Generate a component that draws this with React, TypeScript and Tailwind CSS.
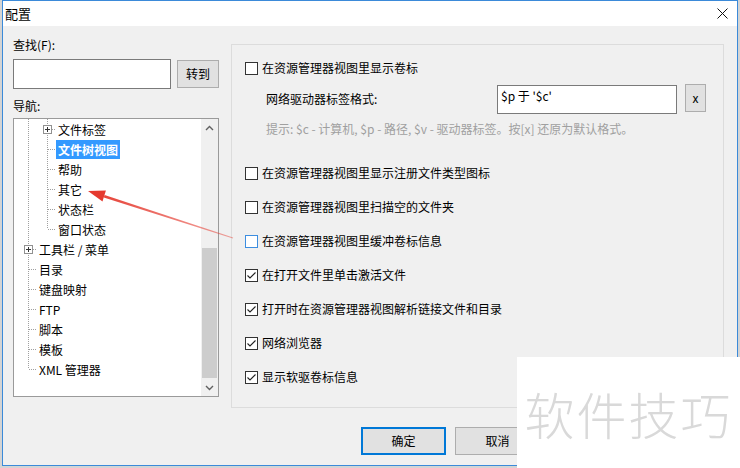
import React from "react";

type Row = { t: string; lv: 0 | 1; plus?: boolean; sel?: boolean; last?: boolean };

const rows: Row[] = [
  { t: "文件标签", lv: 1, plus: true },
  { t: "文件树视图", lv: 1, sel: true },
  { t: "帮助", lv: 1 },
  { t: "其它", lv: 1 },
  { t: "状态栏", lv: 1 },
  { t: "窗口状态", lv: 1, last: true },
  { t: "工具栏 / 菜单", lv: 0, plus: true },
  { t: "目录", lv: 0 },
  { t: "键盘映射", lv: 0 },
  { t: "FTP", lv: 0 },
  { t: "脚本", lv: 0 },
  { t: "模板", lv: 0 },
  { t: "XML 管理器", lv: 0, last: true },
];

const options = [
  { t: "在资源管理器视图里显示注册文件类型图标", checked: false },
  { t: "在资源管理器视图里扫描空的文件夹", checked: false },
  { t: "在资源管理器视图里缓冲卷标信息", checked: false, hover: true },
  { t: "在打开文件里单击激活文件", checked: true },
  { t: "打开时在资源管理器视图解析链接文件和目录", checked: true },
  { t: "网络浏览器", checked: true },
  { t: "显示软驱卷标信息", checked: true },
];

const dot = { stroke: "#a0a0a0", strokeDasharray: "1 1", shapeRendering: "crispEdges" as const };

function PlusBox({ cx }: { cx: number }) {
  return (
    <g shapeRendering="crispEdges">
      <rect x={cx - 4} y={6.5} width={8} height={8} fill="#fff" stroke="#919191" />
      <line x1={cx - 2} y1={10.5} x2={cx + 3} y2={10.5} stroke="#333" />
      <line x1={cx + 0.5} y1={8} x2={cx + 0.5} y2={13} stroke="#333" />
    </g>
  );
}

function TreeLines({ row }: { row: Row }) {
  const w = row.lv === 1 ? 42 : 23;
  return (
    <svg width={w} height={20} className="shrink-0">
      <line x1={14.5} y1={0} x2={14.5} y2={row.lv === 0 && row.last ? 10 : 20} {...dot} />
      {row.lv === 1 && <line x1={33.5} y1={0} x2={33.5} y2={row.last ? 10 : 20} {...dot} />}
      {row.lv === 0 ? (
        <line x1={row.plus ? 19 : 15} y1={10.5} x2={23} y2={10.5} {...dot} />
      ) : (
        <line x1={row.plus ? 38 : 34} y1={10.5} x2={42} y2={10.5} {...dot} />
      )}
      {row.plus && <PlusBox cx={row.lv === 0 ? 14 : 33} />}
    </svg>
  );
}

function Check({ checked, hover }: { checked?: boolean; hover?: boolean }) {
  return (
    <span
      className={
        hover
          ? "w-[13px] h-[13px] shrink-0 border border-[#3d8ee0] bg-white flex items-center justify-center"
          : "w-[13px] h-[13px] shrink-0 border border-[#333333] bg-white flex items-center justify-center"
      }
    >
      {checked && (
        <svg width="11" height="11" viewBox="0 0 11 11">
          <path d="M1.5 5.5 L4 8 L9.5 2.5" fill="none" stroke="#222" strokeWidth="1.1" />
        </svg>
      )}
    </span>
  );
}

export default function App() {
  return (
    <div className="relative w-[740px] h-[468px] overflow-hidden bg-[#d4d4d4] font-['Microsoft_YaHei','Noto_Sans_CJK_SC','Noto_Sans',sans-serif] text-[12px] text-black">
      <div className="ml-[2px] w-[736px] h-[466px] border border-[#3b8ad9] flex flex-col bg-[#f0f0f0]">
        {/* Title bar */}
        <div className="h-[25px] bg-white flex items-center justify-between pl-[2px] pr-[9px]">
          <span className="text-[13px] leading-[16px]">配置</span>
          <svg width="11" height="11" viewBox="0 0 11 11">
            <path d="M0.5 0.5 L10.5 10.5 M10.5 0.5 L0.5 10.5" stroke="#111" strokeWidth="1" />
          </svg>
        </div>

        <div className="flex-1 flex flex-col">
          <div className="flex pl-[10px]">
            {/* Left column */}
            <div className="w-[206px] pt-[11px] flex flex-col">
              <div className="leading-[16px]">查找(F):</div>
              <div className="mt-[6px] flex items-start">
                <div className="w-[158px] h-[30px] bg-white border border-[#7a7a7a]" />
                <button className="ml-[6px] mt-[1px] w-[42px] h-[28px] bg-[#e1e1e1] border border-[#adadad] text-[12px]">
                  转到
                </button>
              </div>
              <div className="mt-[9px] leading-[16px]">导航:</div>
              <div className="mt-[4px] h-[279px] bg-white border border-[#9a9a9a] flex">
                <div className="flex-1 flex flex-col">
                  {rows.map((r) => (
                    <div key={r.t} className="h-[20px] flex items-center">
                      <TreeLines row={r} />
                      <span
                        className={
                          r.sel
                            ? "px-[2px] leading-[19px] bg-[#3399ff] text-white font-semibold"
                            : "px-[2px] leading-[19px]"
                        }
                      >
                        {r.t}
                      </span>
                    </div>
                  ))}
                </div>
                <div className="w-[17px] flex flex-col bg-[#f0f0f0]">
                  <div className="h-[17px] flex items-center justify-center">
                    <svg width="9" height="6" viewBox="0 0 9 6">
                      <path d="M1 5 L4.5 1.5 L8 5" fill="none" stroke="#606060" strokeWidth="1.4" />
                    </svg>
                  </div>
                  <div className="flex-1">
                    <div className="mt-[112px] h-[130px] mx-[1px] bg-[#cdcdcd]" />
                  </div>
                  <div className="h-[17px] flex items-center justify-center">
                    <svg width="9" height="6" viewBox="0 0 9 6">
                      <path d="M1 1 L4.5 4.5 L8 1" fill="none" stroke="#606060" strokeWidth="1.4" />
                    </svg>
                  </div>
                </div>
              </div>
            </div>

            {/* Right group */}
            <div className="ml-[12px] mt-[18px] w-[493px] h-[364px] border border-[#dcdcdc] flex flex-col">
              <div className="mt-[13px] h-[20px] pl-[13px] flex items-center">
                <Check />
                <span className="ml-[4px]">在资源管理器视图里显示卷标</span>
              </div>
              <div className="mt-[6px] h-[30px] flex items-start">
                <span className="pl-[34px] w-[265px] leading-[30px]">网络驱动器标签格式:</span>
                <div className="mt-[1px] w-[180px] h-[29px] bg-white border border-[#7a7a7a] pl-[3px] pt-[2px] leading-[16px]">
                  $p 于 '$c'
                </div>
                <button className="ml-[8px] w-[21px] h-[28px] bg-[#e1e1e1] border border-[#adadad] text-[12px] leading-[14px]">
                  x
                </button>
              </div>
              <div className="mt-[7px] pl-[34px] leading-[16px] text-[#a0a0a0]">
                提示: $c - 计算机, $p - 路径, $v - 驱动器标签。按[x] 还原为默认格式。
              </div>
              <div className="mt-[26px] flex flex-col gap-[14px]">
                {options.map((o) => (
                  <div key={o.t} className="h-[20px] pl-[13px] flex items-center">
                    <Check checked={o.checked} hover={o.hover} />
                    <span className="ml-[4px]">{o.t}</span>
                  </div>
                ))}
              </div>
            </div>
          </div>

          {/* Buttons */}
          <div className="mt-[19px] pl-[358px] flex gap-[9px]">
            <button className="w-[85px] h-[28px] bg-[#e1e1e1] border-2 border-[#0078d7] text-[12px]">确定</button>
            <button className="w-[85px] h-[28px] bg-[#e1e1e1] border border-[#adadad] text-[12px]">取消</button>
          </div>
        </div>
      </div>

      {/* Red annotation arrow */}
      <svg className="absolute left-0 top-0 pointer-events-none" width="740" height="468">
        <defs>
          <linearGradient id="fade" x1="88" y1="191" x2="233" y2="238" gradientUnits="userSpaceOnUse">
            <stop offset="0" stopColor="#e53a2f" />
            <stop offset="1" stopColor="#e53a2f" stopOpacity="0.45" />
          </linearGradient>
        </defs>
        <polygon points="104.6,195 233.1,237.6 232.9,238.4 103.8,197.4" fill="url(#fade)" />
        <polygon points="88,191 105.9,190.6 102.5,201.6" fill="#e53a2f" />
      </svg>

      {/* Watermark */}
      <div className="absolute left-[517px] top-[357px] w-[223px] h-[111px] bg-white flex items-center justify-center">
        <span className="text-[50px] leading-[56px] tracking-[2px] font-light text-[#d9d9d9] font-['Noto_Sans_CJK_SC',sans-serif]">
          软件技巧
        </span>
      </div>
    </div>
  );
}
